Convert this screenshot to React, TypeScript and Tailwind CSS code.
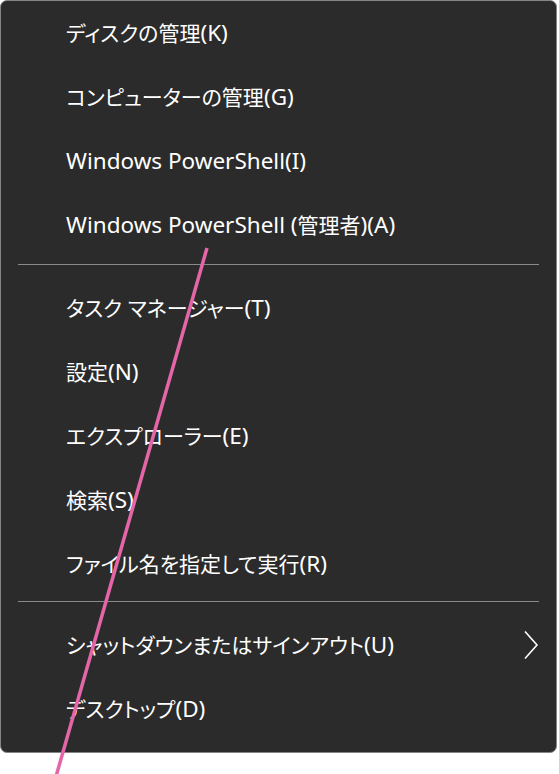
const sections: { label: string; sub?: boolean }[][] = [
  [
    { label: "ディスクの管理(K)" },
    { label: "コンピューターの管理(G)" },
    { label: "Windows PowerShell(I)" },
    { label: "Windows PowerShell (管理者)(A)" },
  ],
  [
    { label: "タスク マネージャー(T)" },
    { label: "設定(N)" },
    { label: "エクスプローラー(E)" },
    { label: "検索(S)" },
    { label: "ファイル名を指定して実行(R)" },
  ],
  [
    { label: "シャットダウンまたはサインアウト(U)", sub: true },
    { label: "デスクトップ(D)" },
  ],
];

// japanese runs are drawn a bit smaller than latin ones
const Label = ({ text }: { text: string }) => (
  <span className="flex-1 leading-none whitespace-pre">
    {text.split(/([\u3000-\u9fff\uff00-\uffef]+)/).map((part, i) =>
      i % 2 === 1 ? (
        <span key={i} className="text-[21px]">
          {part}
        </span>
      ) : (
        <span key={i}>{part}</span>
      )
    )}
  </span>
);

const App = () => {
  return (
    <div className="relative w-[559px] h-[774px] bg-white overflow-hidden">
      <div className="w-[557px] h-[753px] bg-[#2b2b2b] border border-[#858585] rounded-[7px] font-['Noto_Sans','Noto_Sans_CJK_JP',sans-serif] text-[22.5px] text-white [font-feature-settings:'palt']">
        {sections.map((items, si) => (
          <div key={si}>
            {si > 0 && (
              <div className={si === 1 ? "pt-[7px] pb-[11px] px-[17px]" : "pt-[5px] pb-[11px] px-[17px]"}>
                <div className="h-px bg-[#8a8a8a]" />
              </div>
            )}
            {items.map((it) => (
              <div key={it.label} className="flex items-center h-16 pl-[65px] pr-[16px]">
                <Label text={it.label} />
                {it.sub && (
                  <svg width="16" height="30" viewBox="0 0 16 30" className="mr-[1px]">
                    <path d="M2 1.5 L14 15 L2 28.5" fill="none" stroke="#ffffff" strokeWidth="1.6" />
                  </svg>
                )}
              </div>
            ))}
          </div>
        ))}
      </div>
      <svg className="absolute inset-0 pointer-events-none" width="559" height="774">
        <line x1="207" y1="248" x2="55" y2="780" stroke="#e466a8" strokeWidth="3.5" />
      </svg>
    </div>
  );
};

export default App;
